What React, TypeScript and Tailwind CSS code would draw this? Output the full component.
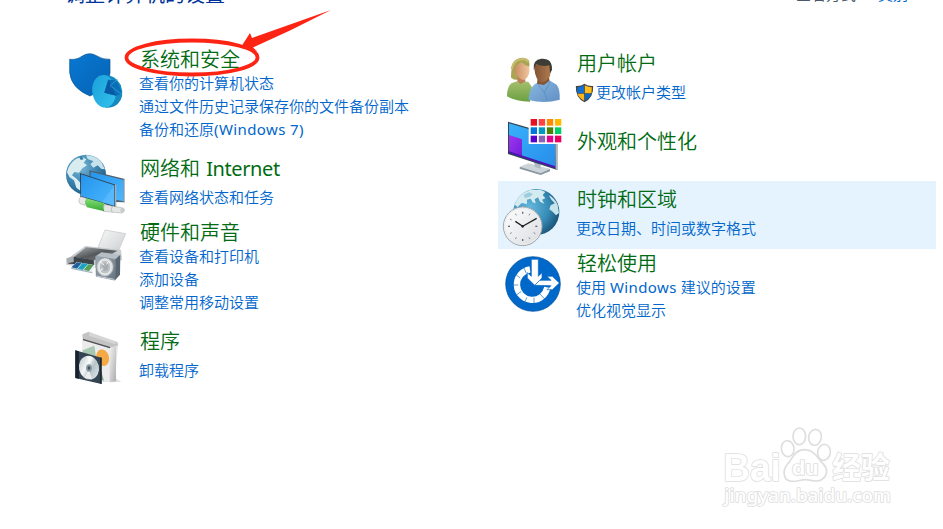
import React from 'react';
import type { ReactNode } from 'react';

type Category = {
  title: string;
  icon: ReactNode;
  links: string[];
  shield?: boolean;
  active?: boolean;
};

function Icon({ viewBox, children }: { viewBox: string; children: ReactNode }): React.JSX.Element {
  return (
    <svg viewBox={viewBox} className="mt-[3px] ml-[5px] h-16 w-16 shrink-0 overflow-visible">
      {children}
    </svg>
  );
}

function SecurityIcon() {
  return (
    <Icon viewBox="30 24 192 192">
      <defs>
        <linearGradient id="secShield" x1="0" y1="0" x2="1" y2="1">
          <stop offset="0" stopColor="#0878d2" />
          <stop offset="1" stopColor="#0562b4" />
        </linearGradient>
        <linearGradient id="secPie" x1="0" y1="0" x2="1" y2="1">
          <stop offset="0" stopColor="#1a9fd9" />
          <stop offset="1" stopColor="#35c3ee" />
        </linearGradient>
      </defs>
      <path
        d="M44 58Q67 60 82 48Q104 34 126 48Q142 59 165 58V100Q161 146 105 168Q49 145 44 98Z"
        fill="url(#secShield)"
        stroke="#0a5490"
        strokeWidth="2"
      />
      <path d="M147 104Q181 104 197 134Q210 171 188 192Q176 204 152 203L139 190Z" fill="#168ac0" />
      <ellipse cx="147" cy="154" rx="35" ry="49" fill="url(#secPie)" transform="rotate(-8 147 154)" />
      <path d="M159 119L148 158L184 167L198 162Q199 145 183 121Z" fill="#0870b8" />
      <path d="M148 158L161 118L184 167Z" fill="#075aa5" />
      <path d="M165 137L188 118M165 137L199 162" stroke="#49a9d3" strokeWidth="2" />
    </Icon>
  );
}

function NetworkIcon() {
  return (
    <Icon viewBox="30 24 192 192">
      <defs>
        <radialGradient id="netGlobe" cx=".35" cy=".3" r=".75">
          <stop offset="0" stopColor="#7eb8d6" />
          <stop offset=".55" stopColor="#3c86b2" />
          <stop offset="1" stopColor="#1c5a82" />
        </radialGradient>
        <linearGradient id="netScreen" x1="0" y1="0" x2="1" y2="1">
          <stop offset="0" stopColor="#2394ed" />
          <stop offset="1" stopColor="#4eb8fd" />
        </linearGradient>
        <linearGradient id="netCable" x1="0" y1="0" x2="0" y2="1">
          <stop offset="0" stopColor="#85df76" />
          <stop offset="1" stopColor="#35a934" />
        </linearGradient>
      </defs>
      <circle cx="93" cy="89" r="60" fill="url(#netGlobe)" />
      <path d="M36 82Q42 54 64 41L82 36L94 43L86 53L96 61L82 70L72 83L58 81L51 91L65 101L76 113V137L64 128L57 106L44 97Z" fill="#d9edf1" />
      <path d="M93 31Q121 30 139 51L150 73L139 72L128 61L115 68L106 58L115 49L98 42Z" fill="#c6e2ea" />
      <path d="M73 36L81 34L86 43L77 45Z" fill="#387fa8" />
      <path d="M103 76L210 102V172L180 171L104 149Z" fill="#50606c" />
      <path d="M107 80L206 105V169L107 150Z" fill="url(#netScreen)" />
      <path d="M206 103L210 102V172L206 174Z" fill="#b5bcc1" />
      <path d="M75 84L182 119V187L76 157Z" fill="#2b4358" />
      <path d="M78 88L178 121V182L78 153Z" fill="url(#netScreen)" />
      <path d="M178 121L141 172L178 182Z" fill="#67c0ff" opacity=".5" />
      <path d="M180 117L184 119V188L180 187Z" fill="#a4adb4" />
      <path d="M78 155L94 160L90 181L75 176Q67 165 78 155Z" fill="#e8e9e7" stroke="#9da19f" strokeWidth="1.5" />
      <path d="M147 179L199 188Q211 189 207 200L200 204L145 199Z" fill="#e5e7e5" stroke="#9da19f" strokeWidth="1.5" />
      <path d="M94 160L149 175Q142 187 148 199L96 187Q86 174 94 160Z" fill="url(#netCable)" />
      <ellipse cx="202" cy="196" rx="6" ry="8" fill="#c7cbca" />
      <path d="M172 184Q165 193 172 202" fill="none" stroke="#a5aaa8" strokeWidth="2" />
    </Icon>
  );
}

function HardwareIcon() {
  return (
    <Icon viewBox="30 3 192 192">
      <defs>
        <linearGradient id="hwPaper" x1="0" y1="0" x2="1" y2="1">
          <stop offset="0" stopColor="#f8f8f8" />
          <stop offset="1" stopColor="#c9cdcf" />
        </linearGradient>
        <linearGradient id="hwTop" x1="0" y1="0" x2="1" y2="1">
          <stop offset="0" stopColor="#a9adaf" />
          <stop offset=".5" stopColor="#55595c" />
          <stop offset="1" stopColor="#84898c" />
        </linearGradient>
        <linearGradient id="hwSpeaker" x1="0" y1="0" x2="1" y2="1">
          <stop offset="0" stopColor="#9eabb6" />
          <stop offset="1" stopColor="#65737f" />
        </linearGradient>
      </defs>
      <path d="M150 30L212 41L186 103L129 82Z" fill="url(#hwPaper)" stroke="#c3c5c6" strokeWidth="2" />
      <path d="M34 119L91 78L198 89L201 119L166 137L109 145L34 134Z" fill="#c8cccf" />
      <path d="M58 110L94 82L187 92L154 112L116 121Z" fill="url(#hwTop)" />
      <path d="M36 117L57 110L116 120L117 135L40 131Z" fill="#3d454b" />
      <path d="M34 115L56 109L56 126L37 130Z" fill="#a7adb2" />
      <path d="M65 126L122 136L112 157L48 144Z" fill="#ecf2f5" />
      <path d="M66 127L80 129L66 146L49 142Z" fill="#225f9d" />
      <path d="M82 129L99 132L83 150L68 147Z" fill="#1da3bd" />
      <path d="M100 133L116 135L102 153L86 150Z" fill="#579e56" />
      <path d="M49 143L112 156V160L49 147Z" fill="#a3b5c2" />
      <path d="M122 109L139 97L195 104L181 119L179 180L124 169Z" fill="#b5bec5" />
      <path d="M122 109L181 118L180 181L123 169Z" fill="url(#hwSpeaker)" stroke="#788690" strokeWidth="1" />
      <path d="M181 118L196 104L195 164L180 181Z" fill="#586671" />
      <ellipse cx="150" cy="141" rx="25" ry="28" fill="#d9dcdd" stroke="#8f999f" strokeWidth="2" />
      <ellipse cx="150" cy="141" rx="18" ry="21" fill="#bcc2c6" stroke="#f1f2f2" strokeWidth="3" />
      <ellipse cx="151" cy="141" rx="9" ry="11" fill="#a5adb2" />
      <path d="M136 125L148 136M161 123L155 133M133 153L145 145" stroke="#f6f7f7" strokeWidth="3" />
      <path d="M124 168L178 178" stroke="#c7cfd4" strokeWidth="3" />
    </Icon>
  );
}

function ProgramsIcon() {
  return (
    <Icon viewBox="15 18 192 192">
      <defs>
        <linearGradient id="prSide" x1="0" y1="0" x2="1" y2="1">
          <stop offset="0" stopColor="#f3f2f2" />
          <stop offset="1" stopColor="#aeadae" />
        </linearGradient>
        <linearGradient id="prDisc" x1="0" y1="0" x2="1" y2="1">
          <stop offset="0" stopColor="#afbfc4" />
          <stop offset=".4" stopColor="#f4f6f6" />
          <stop offset=".6" stopColor="#b6c3c9" />
          <stop offset="1" stopColor="#e9eeee" />
        </linearGradient>
      </defs>
      <path d="M121 186H184L166 174Z" fill="#e1e1e1" />
      <path d="M67 45L86 35L175 67L164 187L120 184L68 168Z" fill="#e7e5e5" />
      <path d="M70 55L86 42L166 75L149 80Z" fill="#5c6265" />
      <path d="M67 43L87 35L105 47L169 65L175 76L149 84L69 56Z" fill="#c4c3c4" />
      <path d="M69 56L151 81L149 86L69 62Z" fill="#4d5254" />
      <path d="M86 36L169 65L165 73L88 48Z" fill="#d6d5d5" />
      <path d="M69 61L149 85V187L69 165Z" fill="#edecec" />
      <path d="M149 84L168 77V184L149 187Z" fill="url(#prSide)" />
      <path d="M68 91L103 77L108 110L70 118Z" fill="#a9c8b1" />
      <path d="M124 155L132 182L119 178Z" fill="#7fac8e" />
      <ellipse cx="128" cy="113" rx="19" ry="25" fill="#f5a944" transform="rotate(-15 128 113)" />
      <path d="M46 91L124 113V192L46 174Z" fill="#344452" />
      <path d="M46 91L56 94L57 176L46 174Z" fill="#17222d" />
      <path d="M121 112L125 113V192L121 191Z" fill="#111b24" />
      <ellipse cx="87" cy="143" rx="30" ry="36" fill="url(#prDisc)" transform="rotate(-12 87 143)" />
      <path d="M81 108L87 139L98 112ZM74 174L87 149L96 178Z" fill="#f9fafa" opacity=".75" />
      <ellipse cx="87" cy="144" rx="9" ry="11" fill="#8b9ba3" />
      <ellipse cx="87" cy="144" rx="4" ry="5" fill="#405361" />
    </Icon>
  );
}

function UsersIcon() {
  return (
    <Icon viewBox="24 9 192 192">
      <defs>
        <linearGradient id="usGreen" x1="0" y1="0" x2="0" y2="1">
          <stop offset="0" stopColor="#a4c06d" />
          <stop offset="1" stopColor="#6b9f42" />
        </linearGradient>
        <linearGradient id="usBlue" x1="0" y1="0" x2="1" y2="1">
          <stop offset="0" stopColor="#8bb9e0" />
          <stop offset="1" stopColor="#608fc4" />
        </linearGradient>
        <linearGradient id="usFace" x1="0" y1="0" x2="1" y2="0">
          <stop offset="0" stopColor="#c68b5f" />
          <stop offset="1" stopColor="#f2c79f" />
        </linearGradient>
        <linearGradient id="usFace2" x1="0" y1="0" x2="1" y2="0">
          <stop offset="0" stopColor="#805333" />
          <stop offset="1" stopColor="#b27c50" />
        </linearGradient>
      </defs>
      <path d="M36 154Q36 126 49 115L66 109L100 110L111 127L105 170Q59 168 36 154Z" fill="url(#usGreen)" />
      <path d="M48 97Q48 54 63 44Q85 31 99 46Q106 55 102 67L74 101Q63 109 49 99Z" fill="#aaa552" />
      <path d="M50 72Q56 43 77 43Q94 39 101 51" fill="none" stroke="#c5bd72" strokeWidth="7" />
      <path d="M68 89L90 89L91 110L76 117L67 109Z" fill="#bb805a" />
      <path d="M58 65L80 52Q88 62 103 65Q106 92 91 103Q80 109 69 95Q58 87 58 65Z" fill="url(#usFace)" />
      <path d="M101 158Q104 128 121 116L139 110L163 106L185 119Q196 134 194 164Q148 178 101 165Z" fill="url(#usBlue)" />
      <path d="M128 99L162 91L163 107L147 120L126 116Z" fill="#845434" />
      <path d="M118 72Q123 45 146 48Q169 48 169 70L165 93Q155 111 139 113Q122 107 118 72Z" fill="url(#usFace2)" />
      <path d="M116 75Q113 43 139 41Q173 39 171 75L165 85L163 61Q143 67 124 57Z" fill="#3e3d35" />
      <path d="M126 115L148 143L165 111M148 143L158 168" fill="none" stroke="#5286bc" strokeWidth="2" />
    </Icon>
  );
}

const swatches = [
  ['#e81123', '#ff4343', '#ff8c00', '#ffb900'],
  ['#0078d7', '#0099bc', '#498205', '#00cc6a'],
  ['#5700c9', '#8764b8', '#e3008c', '#ea005e'],
];

function AppearanceIcon() {
  return (
    <Icon viewBox="24 18 192 192">
      <defs>
        <linearGradient id="apScreen" x1="0" y1="0" x2="1" y2="1">
          <stop offset="0" stopColor="#39b0fa" />
          <stop offset="1" stopColor="#278dea" />
        </linearGradient>
        <linearGradient id="apPurple" x1="0" y1="0" x2="1" y2="1">
          <stop offset="0" stopColor="#a134ef" />
          <stop offset="1" stopColor="#7020d9" />
        </linearGradient>
      </defs>
      <path d="M74 172L101 162L165 178V184L137 195L74 176Z" fill="#8998a1" />
      <path d="M74 170L101 160L165 177L137 190Z" fill="#cbd4d9" />
      <path d="M116 153L137 159V176L120 171Z" fill="#aebac1" />
      <path d="M39 35L187 78V180L39 132Z" fill="#2f4656" />
      <path d="M42 40L181 81V173L42 127Z" fill="url(#apScreen)" />
      <path d="M42 75L81 88V139L42 127Z" fill="url(#apPurple)" />
      <path d="M42 124L181 169V175L42 129Z" fill="#5010b4" />
      <path d="M181 78L187 80V180L182 178Z" fill="#b0b7bc" />
      <path d="M101 22H204V102H101Z" fill="#fff" />
      {swatches.map((row, y) =>
        row.map((color, x) => (
          <rect key={color} x={107 + x * 24.3} y={27 + y * 25} width="19" height="20" fill={color} />
        )),
      )}
    </Icon>
  );
}

const ticks = [0, 30, 60, 90, 120, 150, 180, 210, 240, 270, 300, 330];

function ClockIcon() {
  return (
    <Icon viewBox="39 18 192 192">
      <defs>
        <radialGradient id="clGlobe" cx=".35" cy=".4" r=".7">
          <stop offset="0" stopColor="#65b7dc" />
          <stop offset=".6" stopColor="#378cb7" />
          <stop offset="1" stopColor="#184f72" />
        </radialGradient>
        <linearGradient id="clFace" x1="0" y1="0" x2="1" y2="1">
          <stop offset="0" stopColor="#fff" />
          <stop offset="1" stopColor="#d9dce0" />
        </linearGradient>
      </defs>
      <circle cx="139" cy="102" r="69" fill="url(#clGlobe)" />
      <path d="M74 80Q83 49 120 36L151 35L166 42L158 51L166 61L156 65L163 77L150 71L144 58L134 64L137 76L128 73L122 62L111 65L111 78L95 75L83 87Z" fill="#d4ebef" />
      <path d="M176 52Q194 60 203 81L207 105L198 112L188 101L178 94L182 82L194 76L184 65Z" fill="#c5e4ec" />
      <path d="M101 50L118 43L129 49L118 57L104 60Z" fill="#9bcddd" />
      <circle cx="98" cy="145" r="58" fill="url(#clFace)" stroke="#a4a9ad" strokeWidth="3" />
      <circle cx="98" cy="145" r="54" fill="none" stroke="#e9eaeb" strokeWidth="3" />
      {ticks.map((angle) => (
        <path
          key={angle}
          d="M98 101V107"
          stroke="#62676b"
          strokeWidth={angle % 90 === 0 ? 4 : 2}
          transform={`rotate(${angle} 98 145)`}
        />
      ))}
      <path d="M76 130L98 145L140 121" fill="none" stroke="#222628" strokeWidth="4" />
      <circle cx="98" cy="145" r="4" fill="#222628" />
    </Icon>
  );
}

function EaseIcon() {
  return (
    <Icon viewBox="24 6 192 192">
      <circle cx="114" cy="102" r="82" fill="#0068c8" stroke="#004d9b" strokeWidth="2" />
      <path d="M105 58A46 46 0 1 0 157 112" fill="none" stroke="#fff" strokeWidth="19" />
      <path
        d="M86 52L94 70M60 72L76 84M50 105H70M63 136L79 124M87 160L96 142M117 163V143M149 147L135 132"
        stroke="#1871b9"
        strokeWidth="2"
      />
      <path
        d="M109 28H130V79L141 68V84L119 106L97 84V68L109 79Z"
        fill="#fff"
        stroke="#0068c8"
        strokeWidth="2"
      />
      <path
        d="M119 106L134 91H168L156 79H172L193 99L172 119H156L168 107Z"
        fill="#fff"
        stroke="#0068c8"
        strokeWidth="2"
      />
    </Icon>
  );
}

function UacShield() {
  return (
    <svg viewBox="239 109 56 60" className="-ml-px mr-0.5 h-5 w-[19px] shrink-0">
      <path d="M241 118Q257 119 267 111Q277 119 293 118Q295 153 267 167Q239 153 241 118Z" fill="#454545" />
      <path d="M245 122Q257 122 266 116V140H246Z" fill="#0f70d0" />
      <path d="M268 116Q277 122 289 122L288 140H268Z" fill="#ffbd18" />
      <path d="M246 141H266V162Q250 153 246 141Z" fill="#ffb514" />
      <path d="M268 141H288Q284 153 268 162Z" fill="#0968c5" />
    </svg>
  );
}

const leftColumn: Category[] = [
  {
    title: '系统和安全',
    icon: <SecurityIcon />,
    links: ['查看你的计算机状态', '通过文件历史记录保存你的文件备份副本', '备份和还原(Windows 7)'],
  },
  { title: '网络和 Internet', icon: <NetworkIcon />, links: ['查看网络状态和任务'] },
  {
    title: '硬件和声音',
    icon: <HardwareIcon />,
    links: ['查看设备和打印机', '添加设备', '调整常用移动设置'],
  },
  { title: '程序', icon: <ProgramsIcon />, links: ['卸载程序'] },
];

const rightColumn: Category[] = [
  { title: '用户帐户', icon: <UsersIcon />, links: ['更改帐户类型'], shield: true },
  { title: '外观和个性化', icon: <AppearanceIcon />, links: [] },
  { title: '时钟和区域', icon: <ClockIcon />, links: ['更改日期、时间或数字格式'], active: true },
  { title: '轻松使用', icon: <EaseIcon />, links: ['使用 Windows 建议的设置', '优化视觉显示'] },
];

// rows with a single link are centred against the icon, longer ones start at its top
const titleSpacing = ['pt-[17px]', 'pt-[7px] pb-[5px]', 'pt-[3px]', 'pt-[3px]'];
const rowHeight = ['h-[68px]', 'h-[68px]', 'h-[82px]', 'h-[105px]'];

// latin words get their own weight and letter spacing
function Label({ text, latin }: { text: string; latin: string }): React.JSX.Element {
  return (
    <span className="whitespace-pre">
      {text.split(/(\(?[A-Za-z]+(?: 7\))?)/).map((part, i) =>
        i % 2 ? (
          <span key={i} className={latin}>
            {part}
          </span>
        ) : (
          part
        ),
      )}
    </span>
  );
}

function CategoryRow({ item, textGap }: { item: Category; textGap: string }): React.JSX.Element {
  const count = item.links.length;

  return (
    <div className={`flex w-[438px] ${rowHeight[count]} ${item.active ? 'bg-[#e5f3ff]' : ''}`}>
      {item.icon}
      <div className={`whitespace-nowrap ${textGap}`}>
        <h2 className={`pl-px text-[20px] leading-6 font-[350] text-[#006b12] ${titleSpacing[count]}`}>
          <Label text={item.title} latin="ml-px font-normal tracking-[-0.4px]" />
        </h2>
        {item.links.map((link) => (
          <a
            key={link}
            href="#"
            className="flex items-center text-[15px] leading-[23px] font-[350] text-[#0066cc]"
          >
            {item.shield && <UacShield />}
            <Label text={link} latin="font-normal tracking-[0.4px]" />
          </a>
        ))}
      </div>
    </div>
  );
}

function Annotation() {
  return (
    <svg viewBox="120 0 220 90" className="pointer-events-none absolute top-0 left-[120px] h-[90px] w-[220px]">
      <ellipse cx="192" cy="57.5" rx="65.5" ry="17" fill="none" stroke="#fe2414" strokeWidth="3.8" />
      <path d="M331 10L252 38L250 33L241 47L257 51L253 47.5L290 30.5Z" fill="#fe2414" />
    </svg>
  );
}

function Watermark() {
  return (
    <svg
      viewBox="0 0 600 300"
      className="pointer-events-none absolute top-[420px] left-[710px] h-[100px] w-[200px]"
      fill="#fff"
      stroke="#dedede"
      strokeWidth="5"
      strokeLinejoin="round"
    >
      <ellipse cx="233" cy="86" rx="19" ry="24" transform="rotate(-8 233 86)" />
      <ellipse cx="268" cy="49" rx="19" ry="25" />
      <ellipse cx="315" cy="52" rx="19" ry="24" transform="rotate(12 315 52)" />
      <ellipse cx="342" cy="97" rx="19" ry="24" transform="rotate(10 342 97)" />
      <path d="M284 89C314 89 323 116 341 133C360 155 345 183 319 183C305 183 300 179 286 179C271 179 264 184 248 184C220 184 216 154 231 134C248 117 252 89 284 89Z" />
      <g paintOrder="stroke" className="font-['Liberation_Sans','Noto_Sans_CJK_SC',sans-serif] font-bold">
        <text x="40" y="182" fontSize="118" textLength="172" lengthAdjust="spacingAndGlyphs">Bai</text>
        <text x="246" y="165" fontSize="60" textLength="80" lengthAdjust="spacingAndGlyphs">du</text>
        <text x="367" y="174" fontSize="88" textLength="172" lengthAdjust="spacingAndGlyphs">经验</text>
      </g>
      <text
        x="43"
        y="246"
        fontSize="54"
        textLength="500"
        lengthAdjust="spacingAndGlyphs"
        paintOrder="stroke"
        className="font-['Noto_Sans',sans-serif] font-medium"
      >
        jingyan.baidu.com
      </text>
    </svg>
  );
}

function App(): React.JSX.Element {
  return (
    <div className="relative h-[529px] w-[943px] overflow-hidden bg-white font-['Noto_Sans','Noto_Sans_CJK_SC',sans-serif]">
      <header className="flex h-[45px] items-start justify-between pr-[35px] pl-[65px] whitespace-nowrap">
        <h1 className="-mt-[17px] text-[20px] leading-6 text-[#003399]">调整计算机的设置</h1>
        <div className="-mt-[16px] flex text-[15px] leading-5">
          <span className="text-[#4c596b]">查看方式:</span>
          <span className="ml-[18px] text-[#0066cc]">类别</span>
        </div>
      </header>
      <main className="flex pl-[60px]">
        <section>
          {leftColumn.map((item) => (
            <CategoryRow key={item.title} item={item} textGap="ml-[10px]" />
          ))}
        </section>
        <section>
          {rightColumn.map((item) => (
            <CategoryRow key={item.title} item={item} textGap="ml-[9px]" />
          ))}
        </section>
      </main>
      <Annotation />
      <Watermark />
    </div>
  );
}

export default App;
